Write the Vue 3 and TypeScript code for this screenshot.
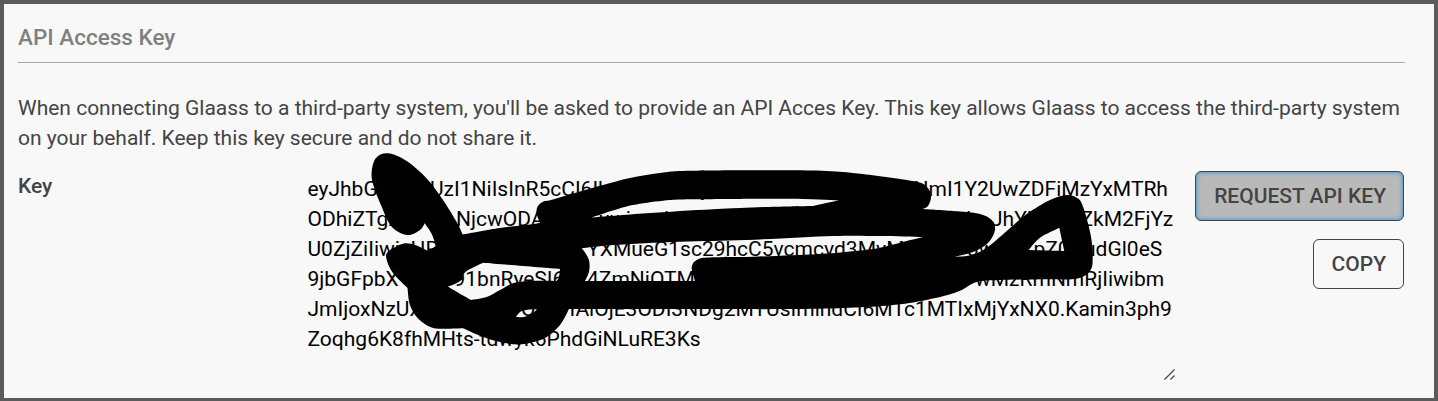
<script setup lang="ts">
type Point = [number, number]
interface Fragment {
  x: number
  y: number
  text: string
}

// Readable pieces of the masked key; covered characters are left out.
const fragments: Fragment[] = [
  { x: 307.5, y: 196, text: 'eyJhbG' },
  { x: 430, y: 196, text: 'UzI1NiIsInR5cCI6Ik' },
  { x: 701.5, y: 196, text: 'j' },
  { x: 913.5, y: 196, text: 'NmI1Y2UwZDFiMzYxMTRh' },
  { x: 307.5, y: 226, text: 'ODhiZTgx' },
  { x: 456, y: 226, text: 'NjcwODA' },
  { x: 598.5, y: 226, text: 'uwi' },
  { x: 664, y: 226, text: 'i' },
  { x: 948, y: 226, text: 'l' },
  { x: 966, y: 226, text: 'l' },
  { x: 991, y: 226, text: 'JhYi' },
  { x: 1080.5, y: 226, text: 'ZkM2FjYz' },
  { x: 307.5, y: 256, text: 'U0ZjZiIiwi' },
  { x: 410.5, y: 256, text: 'HR' },
  { x: 587, y: 256, text: 'YXMueG1sc29hcC5vcmcvd3MvM' },
  { x: 967, y: 256, text: '3w' },
  { x: 1033.5, y: 256, text: 'pZ0' },
  { x: 1084, y: 256, text: 'udGl0eS' },
  { x: 307.5, y: 286, text: '9jbGFpbX' },
  { x: 453.5, y: 286, text: '91bnRyeSI6' },
  { x: 587, y: 286, text: '4ZmNiOTM' },
  { x: 975, y: 286, text: 'wMzRmNmRjIiwibm' },
  { x: 307.5, y: 316, text: 'JmIjoxNzUx' },
  { x: 521, y: 316, text: 'Q' },
  { x: 569.5, y: 316, text: 'IAiOjE3ODI3NDg2MTUsImlhdCI6MTc1MTIxMjYxNX0.Kamin3ph9' },
  { x: 307.5, y: 346, text: 'Zoqhg6K8fhMHts-tdwyk6PhdGiNLuRE3Ks' },
]

// A point given twice in a row makes a sharp corner.
const outline: Point[] = [
  [371.7, 171.7], [376, 158], [388, 153.3], [406.7, 161], [426.7, 178.5], [443, 200], [456.7, 222], [462.7, 234.5], [462.7, 234.5],
  [500, 228], [530, 224.5], [540, 222.7], [540, 222.7], [536.7, 214], [537.5, 206.7], [543, 201.7], [553, 199.5], [580, 191.5],
  [603, 185], [630, 178], [660, 173], [690, 170.8], [780, 170.3], [826.7, 171], [860, 173.7], [913, 181], [926.7, 186.7], [931, 196.7],
  [928, 206], [922.7, 209], [922.7, 209], [960, 211.5], [980, 214], [991.7, 220], [995, 230], [988, 243], [973, 252], [955, 256.7], [955, 256.7],
  [968, 255.7], [980, 251.7], [991.7, 244], [1006.7, 231], [1026.7, 214], [1050, 200], [1066.7, 195], [1078, 198.5], [1083.5, 208],
  [1090.7, 235], [1092.7, 258], [1090, 271], [1076.7, 278.7], [1046.7, 279.3], [1000, 280], [976.7, 282], [960, 290.7],
  [936.7, 297.7], [900, 304.3], [860, 307.3], [800, 309], [680, 309], [569, 309], [569, 309], [560, 325], [545, 338], [521.7, 344.3], [500, 342],
  [480, 335.7], [463, 328.3], [463, 328.3], [446.7, 328.7], [431.7, 327.5], [418, 318.5], [410, 305], [407.5, 288], [407.5, 288], [393, 273], [386.7, 260],
  [388, 251.7], [403, 243.7], [415, 245], [428, 251], [428, 251], [436, 246], [436, 246], [431.7, 234], [424.7, 223.3], [424.7, 223.3],
  [420, 230], [407.3, 235], [391.7, 226.7], [381.7, 206.7], [373.3, 185],
]
const openings: Point[][] = [
  [[591, 217.7], [591, 217.7], [613, 210.5], [633, 205], [663, 200.7], [693, 199.3], [786.7, 198.7], [839, 200.3], [839, 200.3], [813, 206], [813, 206], [766.7, 207], [713, 209.3], [646.7, 213.3]],
  [[581.7, 248.3], [581.7, 248.3], [613, 245], [680, 241.7], [746.7, 240], [833, 236], [880, 236], [922.7, 237], [922.7, 237], [903, 242], [880, 247.7], [860, 250.5], [820, 254], [753, 256.7], [713, 257.3], [698, 259.3], [691.7, 267], [695, 281], [695, 281], [585, 281], [585, 281], [589, 271.7], [589.3, 261.7], [586, 254]],
  [[483, 262.7], [483, 262.7], [560, 269], [560, 269], [559, 276.7], [556.7, 281], [556.7, 281], [530, 281], [513, 283.3], [500, 290], [486.7, 297], [471, 300], [471, 300], [448, 286.7], [448, 286.7], [460, 281], [465.7, 271.7]],
  [[516, 316.7], [516, 316.7], [521.7, 311], [533, 309.3], [537, 309.5], [537, 309.5], [530, 315], [521.7, 317.3]],
  [[1059.3, 227.7], [1059.3, 227.7], [1064.3, 251], [1064.3, 251], [1028.7, 250], [1028.7, 250], [1040, 237.7]],
]

function smooth(points: Point[]): string {
  const n = points.length
  const at = (i: number): Point => points[(i + n) % n]
  let d = `M${points[0].join(' ')}`
  for (let i = 0; i < n; i++) {
    const [a, b, c, e] = [at(i - 1), at(i), at(i + 1), at(i + 2)]
    if (b[0] === c[0] && b[1] === c[1]) continue
    const first = [b[0] + (c[0] - a[0]) / 6, b[1] + (c[1] - a[1]) / 6]
    const second = [c[0] - (e[0] - b[0]) / 6, c[1] - (e[1] - b[1]) / 6]
    d += `C${first.join(' ')} ${second.join(' ')} ${c.join(' ')}`
  }
  return d + 'Z'
}

const maskPath = [outline, ...openings].map(smooth).join('')
</script>

<template>
  <section class="panel">
    <h2 class="title">API Access Key</h2>
    <p class="description">
      When connecting Glaass to a third-party system, you'll be asked to provide an API Acces Key. This key allows Glaass to access the third-party system on your behalf. Keep this key secure and do not share it.
    </p>
    <div class="field">
      <span class="label">Key</span>
      <svg class="key" width="880" height="236" viewBox="300 150 880 236">
        <text v-for="(f, i) in fragments" :key="i" :x="f.x" :y="f.y">{{ f.text }}</text>
        <path :d="maskPath" fill="#000" fill-rule="evenodd" />
        <path class="grip" d="M1164.5 379.5L1174.5 369.5M1170.5 379.5L1174.5 375.5" />
      </svg>
      <div class="actions">
        <button class="button active" type="button">REQUEST API KEY</button>
        <button class="button" type="button">COPY</button>
      </div>
    </div>
  </section>
</template>

<style>
body {
  margin: 0;
}
</style>

<style scoped>
.panel {
  box-sizing: border-box;
  height: 401px;
  padding: 0 29px 0 14px;
  overflow: hidden;
  border: 4px solid #5b5b5c;
  border-bottom-width: 3px;
  background: #f8f8f8;
  color: #444;
  font-family: Roboto, sans-serif;
  font-size: 21px;
}
.title {
  box-sizing: border-box;
  height: 59px;
  margin: 0;
  padding-top: 18px;
  border-bottom: 1px solid #aaa;
  color: #808080;
  font-size: 22.5px;
  font-weight: 500;
  line-height: 30px;
}
.description {
  height: 60px;
  margin: 30px 0 0;
  line-height: 30px;
}
.field {
  display: flex;
  margin-top: -3px;
}
.label {
  width: 282px;
  padding-top: 21px;
  font-weight: 500;
  line-height: 30px;
}
.key {
  flex: none;
  display: block;
  font-size: 21px;
}
.key text {
  fill: #000;
}
.grip {
  fill: none;
  stroke: #444;
  stroke-width: 1.2;
}
.actions {
  flex: 1;
  display: flex;
  flex-direction: column;
  align-items: flex-end;
  gap: 18px;
  padding: 21px 1px 0 0;
}
.button {
  box-sizing: border-box;
  height: 50px;
  padding: 0 17px 0 18px;
  border: 1px solid #444;
  border-radius: 6px;
  background: transparent;
  color: #444;
  font: 500 21px/48px Roboto, sans-serif;
  white-space: nowrap;
}
.active {
  background: #b9b9b9;
  box-shadow: inset 0 0 5px #1c94dc;
}
</style>
